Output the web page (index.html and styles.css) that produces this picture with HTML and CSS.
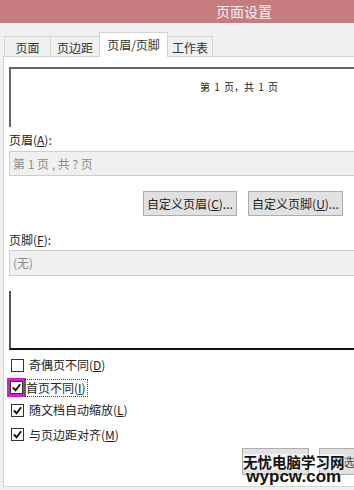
FILE: index.html
```html
<!DOCTYPE html>
<html>
<head>
<meta charset="utf-8">
<link rel="stylesheet" href="styles.css">
</head>
<body>
<div class="dialog">
  <div class="titlebar"><span class="title">页面设置</span></div>
  <div class="tabs">
    <div class="tab tab-a">页面</div>
    <div class="tab tab-b">页边距</div>
    <div class="tab tab-c active">页眉/页脚</div>
    <div class="tab tab-d">工作表</div>
  </div>
  <div class="panel">
    <div class="preview preview-top"><span class="preview-text">第 1 页，共 1 页</span></div>
    <div class="label">页眉(<u>A</u>):</div>
    <div class="field">第 1 页 , 共 ? 页</div>
    <div class="btnrow">
      <div class="btn btn-h">自定义页眉(<u>C</u>)...</div>
      <div class="btn btn-f">自定义页脚(<u>U</u>)...</div>
    </div>
    <div class="label label-f">页脚(<u>F</u>):</div>
    <div class="field field-f">(无)</div>
    <div class="preview preview-bottom"></div>
    <div class="checks">
      <div class="check"><span class="box"></span><span class="ctext">奇偶页不同(<u>D</u>)</span></div>
      <div class="check"><span class="hl"><span class="box"><svg viewBox="0 0 12 12" width="11" height="11"><polyline points="2,6 5,9 10,2.5" fill="none" stroke="#111" stroke-width="2"/></svg></span></span><span class="ctext focus">首页不同(<u>I</u>)</span></div>
      <div class="check"><span class="box"><svg viewBox="0 0 12 12" width="11" height="11"><polyline points="2,6 5,9 10,2.5" fill="none" stroke="#111" stroke-width="2"/></svg></span><span class="ctext">随文档自动缩放(<u>L</u>)</span></div>
      <div class="check check-last"><span class="box"><svg viewBox="0 0 12 12" width="11" height="11"><polyline points="2,6 5,9 10,2.5" fill="none" stroke="#111" stroke-width="2"/></svg></span><span class="ctext">与页边距对齐(<u>M</u>)</span></div>
    </div>
    <div class="bottombtns">
      <div class="btn bbtn1"></div>
      <div class="btn bbtn2">选项(O)...</div>
    </div>
    <div class="watermark">
      <div class="wm-cn">无忧电脑学习网</div>
      <div class="wm-en">wypcw.com</div>
    </div>
  </div>
</div>
</body>
</html>
```

FILE: styles.css
```css
html, body {
  margin: 0;
  padding: 0;
  width: 354px;
  height: 490px;
  overflow: hidden;
  background: #f0f0f0;
}
body {
  font-family: "Noto Sans CJK SC", "Noto Sans", sans-serif;
  font-size: 12px;
  color: #222;
}
.dialog {
  width: 400px;
  height: 490px;
  background: #f0f0f0;
}
.titlebar {
  height: 23px;
  background: #c67c7f;
  display: flex;
  align-items: center;
}
.title {
  margin-left: 216px;
  font-size: 14px;
  color: #fbeeee;
  line-height: 16px;
  margin-top: -1px;
}
.tabs {
  display: flex;
  align-items: flex-end;
  margin-top: 9px;
  padding-left: 4px;
  height: 25px;
}
.tab {
  height: 21px;
  box-sizing: border-box;
  border: 1px solid #d4d4d4;
  border-bottom: none;
  background: #f0f0f0;
  display: flex;
  align-items: center;
  justify-content: center;
  font-size: 12px;
  color: #333;
  margin-right: -1px;
}
.tab-a { width: 47px; }
.tab-b { width: 50px; }
.tab-c { width: 69px; }
.tab-d { width: 46px; }
.tab.active {
  height: 25px;
  background: #fff;
  position: relative;
  z-index: 1;
  padding-bottom: 2px;
}
.panel {
  position: relative;
  margin-left: 3px;
  margin-top: -1px;
  height: 431px;
  background: #fff;
  border: 1px solid #d4d4d4;
  padding-left: 5px;
  box-sizing: border-box;
}
.preview {
  height: 60px;
  box-sizing: border-box;
  background: #fff;
}
.preview-top {
  margin-top: 10px;
  border-top: 2px solid #666;
  border-left: 2px solid #666;
  padding-left: 189px;
  padding-top: 8px;
}
.preview-text {
  font-size: 10px;
  font-family: "Noto Sans CJK SC", sans-serif;
  color: #222;
  word-spacing: 2px;
}
.label {
  margin-top: 5px;
  height: 16px;
  line-height: 16px;
  font-size: 12px;
  color: #222;
}
.field {
  margin-top: 3px;
  height: 25px;
  box-sizing: border-box;
  border: 1px solid #cdcdcd;
  background: #f0f0f0;
  color: #8c8c8c;
  padding-left: 3px;
  line-height: 23px;
  font-size: 12px;
}
.btnrow {
  display: flex;
  margin-top: 15px;
  padding-left: 134px;
  gap: 11px;
}
.btn {
  height: 25px;
  box-sizing: border-box;
  border: 1px solid #adadad;
  background: #e1e1e1;
  display: flex;
  align-items: center;
  justify-content: center;
  font-size: 12px;
  color: #222;
}
.btn-h { width: 94px; }
.btn-f { width: 95px; }
.label-f { margin-top: 16px; }
.field-f {
  margin-top: 2px;
  height: 26px;
  line-height: 24px;
}
.preview-bottom {
  margin-top: 15px;
  height: 59px;
  border-left: 2px solid #555;
  border-bottom: 2px solid #111;
}
.checks {
  margin-top: 4px;
  display: flex;
  flex-direction: column;
}
.check {
  height: 22.5px;
  display: flex;
  align-items: center;
  padding-left: 2px;
}
.check-last { margin-top: 2px; }
.box {
  width: 11px;
  height: 11px;
  border: 1px solid #333;
  background: #fff;
  display: flex;
  align-items: center;
  justify-content: center;
  flex: none;
}
.box svg { display: block; }
.hl {
  margin-left: -4px;
  margin-right: -3px;
  border: 3px solid #d21fd0;
  padding: 0;
  display: flex;
}
.ctext {
  margin-left: 4px;
  font-size: 12px;
  color: #222;
  line-height: 16px;
  padding: 0 1px;
}
.focus {
  outline: 1px dotted #444;
  margin-left: 2px;
}
.bottombtns {
  display: flex;
  margin-top: 2px;
  padding-left: 233px;
  gap: 10px;
}
.bbtn1 { width: 68px; height: 27px; }
.bbtn2 { width: 80px; height: 27px; justify-content: flex-start; padding-left: 22px; color: #444; }
.watermark {
  position: absolute;
  left: 239px;
  top: 397px;
  display: flex;
  flex-direction: column;
  align-items: center;
}
.wm-cn {
  font-family: "Noto Sans CJK SC", sans-serif;
  font-weight: 700;
  font-size: 14.5px;
  line-height: 16px;
  color: #111;
  background: rgba(255,255,255,0.6);
}
.wm-en {
  font-family: "Liberation Sans", Arial, sans-serif;
  font-weight: 700;
  font-size: 17px;
  line-height: 14px;
  color: #111;
}
```
